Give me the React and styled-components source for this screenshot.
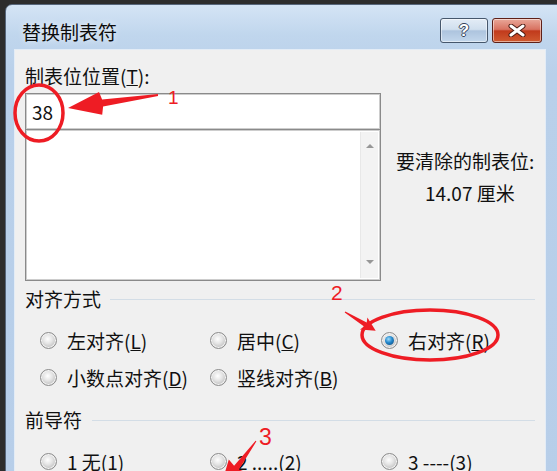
import React from "react";
import styled, { createGlobalStyle } from "styled-components";

const GlobalStyle = createGlobalStyle`
  html, body {
    margin: 0;
    padding: 0;
    background: #2b2b2b;
  }
  body {
    font-family: "Noto Sans CJK SC", "Noto Sans", sans-serif;
  }
`;

const Screen = styled.div`
  position: relative;
  width: 557px;
  height: 471px;
  overflow: hidden;
  box-sizing: border-box;
  padding: 4px 0 0 5px;
  background: #2d2d2d;
`;

const Window = styled.div`
  width: 570px;
  height: 500px;
  box-sizing: border-box;
  border: 1px solid #56667b;
  border-radius: 7px 7px 0 0;
  background: linear-gradient(180deg, #d4e4f5 0px, #c0d6ed 30px, #b9d0ea 70px, #b7cee9 100%);
  display: flex;
  flex-direction: column;
`;

const TitleBar = styled.div`
  width: 540px;
  height: 45px;
  box-sizing: border-box;
  padding: 13px 4px 0 16px;
  display: flex;
  align-items: flex-start;
  justify-content: space-between;
`;

const Title = styled.div`
  margin-top: 3px;
  font-size: 19px;
  line-height: 22px;
  color: #0c0c0c;
  text-shadow: 0 0 6px rgba(255, 255, 255, 0.9);
`;

const Captions = styled.div`
  display: flex;
  gap: 4px;
`;

const CaptionButton = styled.div`
  width: ${(p) => p.$w}px;
  height: 25px;
  box-sizing: border-box;
  border: 1px solid ${(p) => (p.$danger ? "#5e2018" : "#46576c")};
  border-radius: 3px;
  box-shadow: inset 0 0 0 1px rgba(255, 255, 255, 0.5);
  background: ${(p) =>
    p.$danger
      ? "linear-gradient(180deg, #e9a89a 0%, #d87261 45%, #c13a1c 52%, #d05a30 100%)"
      : "linear-gradient(180deg, #e3ecf6 0%, #d0dfee 45%, #adc4de 52%, #c3d7ec 100%)"};
  display: flex;
  align-items: center;
  justify-content: center;
`;

const HelpGlyph = styled.span`
  font-family: "Liberation Sans", Arial, sans-serif;
  font-weight: bold;
  font-size: 17px;
  line-height: 17px;
  color: #fff;
  text-shadow: 1px 0 0 #34445a, -1px 0 0 #34445a, 0 1px 0 #34445a, 0 -1px 0 #34445a;
`;

const Client = styled.div`
  margin-left: 9px;
  width: 530px;
  flex: 1;
  box-sizing: border-box;
  padding: 0 10px;
  background: #f0f0f0;
  box-shadow: 0 0 0 1px #e3ecf6;
  font-size: 19px;
  line-height: 22px;
  color: #101010;
`;

const FieldLabel = styled.div`
  margin-top: 15px;
`;

const TopSection = styled.div`
  margin-top: 6px;
  display: flex;
  gap: 15px;
`;

const TabColumn = styled.div`
  width: 356px;
  display: flex;
  flex-direction: column;
`;

const TextBox = styled.div`
  height: 37px;
  box-sizing: border-box;
  border: 1px solid #8a8a8a;
  box-shadow: inset 0 0 0 1px #cdcdcd;
  background: #fff;
  padding-left: 6px;
  display: flex;
  align-items: center;
`;

const ListBox = styled.div`
  margin-top: -1px;
  height: 152px;
  box-sizing: border-box;
  border: 1px solid #8a8a8a;
  box-shadow: inset 0 0 0 1px #cdcdcd;
  background: #fff;
  padding: 2px;
  display: flex;
  justify-content: flex-end;
`;

const ScrollTrack = styled.div`
  width: 17px;
  background: #f3f3f3;
  border-left: 1px solid #e8e8e8;
  display: flex;
  flex-direction: column;
  justify-content: space-between;
  align-items: center;
  padding: 12px 0 14px;
`;

const Arrow = styled.div`
  width: 0;
  height: 0;
  border-left: 4px solid transparent;
  border-right: 4px solid transparent;
  ${(p) => (p.$down ? "border-top: 4px solid #979797;" : "border-bottom: 4px solid #979797;")}
`;

const ClearInfo = styled.div`
  margin-top: 57px;
  display: flex;
  flex-direction: column;
  gap: 10px;
`;

const ClearValue = styled.div`
  padding-left: 29px;
`;

const GroupHeader = styled.div`
  margin-top: ${(p) => p.$top}px;
  display: flex;
  align-items: center;
`;

const Rule = styled.div`
  flex: 1;
  height: 1px;
  margin-left: ${(p) => p.$gap}px;
  background: #d3dde6;
`;

const RadioGrid = styled.div`
  margin-top: ${(p) => p.$top}px;
  padding-left: 15px;
  display: grid;
  grid-template-columns: 170px 171px 1fr;
  grid-auto-rows: 37px;
`;

const RadioItem = styled.div`
  display: flex;
  align-items: center;
  gap: 10px;
  white-space: nowrap;
`;

const RadioDot = styled.span`
  position: relative;
  width: 17px;
  height: 17px;
  box-sizing: border-box;
  flex: none;
  border-radius: 50%;
  border: 1px solid #8c8c8c;
  background: radial-gradient(circle at 45% 40%, #ffffff 0%, #e4e4e4 38%, #c2c2c2 72%, #e2e2e2 100%);
  box-shadow: inset 0 0 0 1px #f4f4f4;

  &::after {
    content: "";
    display: ${(p) => (p.$checked ? "block" : "none")};
    position: absolute;
    left: 3px;
    top: 3px;
    width: 9px;
    height: 9px;
    border-radius: 50%;
    background: radial-gradient(circle at 40% 35%, #9fdcfa 0%, #2287cc 45%, #0b3f6e 100%);
  }
`;

const Marks = styled.svg`
  position: absolute;
  left: 0;
  top: 0;
  pointer-events: none;
`;

const MarkText = styled.text`
  font-family: "Liberation Sans", Arial, sans-serif;
  fill: #ee1c24;
`;

function Radio({ checked, children }) {
  return (
    <RadioItem>
      <RadioDot $checked={checked} />
      <span>{children}</span>
    </RadioItem>
  );
}

const RED = "#ee1c24";

export default function App() {
  return (
    <>
      <GlobalStyle />
      <Screen>
        <Window>
          <TitleBar>
            <Title>替换制表符</Title>
            <Captions>
              <CaptionButton $w={48}>
                <HelpGlyph>?</HelpGlyph>
              </CaptionButton>
              <CaptionButton $w={50} $danger>
                <svg width="18" height="13" viewBox="0 0 18 13">
                  <path d="M3 2 L15 11 M15 2 L3 11" stroke="#4a1a12" strokeWidth="5" strokeLinecap="round" />
                  <path d="M3 2 L15 11 M15 2 L3 11" stroke="#fff" strokeWidth="3" strokeLinecap="round" />
                </svg>
              </CaptionButton>
            </Captions>
          </TitleBar>

          <Client>
            <FieldLabel>
              制表位位置(<u>T</u>):
            </FieldLabel>
            <TopSection>
              <TabColumn>
                <TextBox>38</TextBox>
                <ListBox>
                  <ScrollTrack>
                    <Arrow />
                    <Arrow $down />
                  </ScrollTrack>
                </ListBox>
              </TabColumn>
              <ClearInfo>
                <div>要清除的制表位:</div>
                <ClearValue>14.07 厘米</ClearValue>
              </ClearInfo>
            </TopSection>

            <GroupHeader $top={7}>
              对齐方式
              <Rule $gap={9} />
            </GroupHeader>
            <RadioGrid $top={12}>
              <Radio>
                左对齐(<u>L</u>)
              </Radio>
              <Radio>
                居中(<u>C</u>)
              </Radio>
              <Radio checked>
                右对齐(<u>R</u>)
              </Radio>
              <Radio>
                小数点对齐(<u>D</u>)
              </Radio>
              <Radio>
                竖线对齐(<u>B</u>)
              </Radio>
            </RadioGrid>

            <GroupHeader $top={13}>
              前导符
              <Rule $gap={10} />
            </GroupHeader>
            <RadioGrid $top={12}>
              <Radio>
                1 无(<u>1</u>)
              </Radio>
              <Radio>
                2 .....(<u>2</u>)
              </Radio>
              <Radio>
                3 ----(<u>3</u>)
              </Radio>
            </RadioGrid>
          </Client>
        </Window>

        <Marks width="557" height="471" viewBox="0 0 557 471">
          <ellipse cx="39" cy="113" rx="24" ry="28" fill="none" stroke={RED} strokeWidth="3.5" />
          <polygon
            fill={RED}
            points="157.9,94 102.1,99.5 99,91.9 68,108 102.2,114.7 103.1,106.5 158.1,96"
          />
          <MarkText x="168" y="104" fontSize="19">1</MarkText>

          <MarkText x="331" y="300" fontSize="21">2</MarkText>
          <polygon
            fill={RED}
            points="345.3,311.5 366.7,322.4 367.4,317.5 375.7,330.8 360,329.5 364.1,326.6 344.7,312.5"
          />
          <ellipse cx="430" cy="335" rx="68" ry="25" fill="none" stroke={RED} strokeWidth="3.5" />

          <MarkText x="259" y="445" fontSize="23">3</MarkText>
          <polygon
            fill={RED}
            points="255.6,440.7 234.1,465.8 228.8,459.5 219.4,491 246.6,472.5 238.9,469.4 256.4,441.3"
          />
        </Marks>
      </Screen>
    </>
  );
}
